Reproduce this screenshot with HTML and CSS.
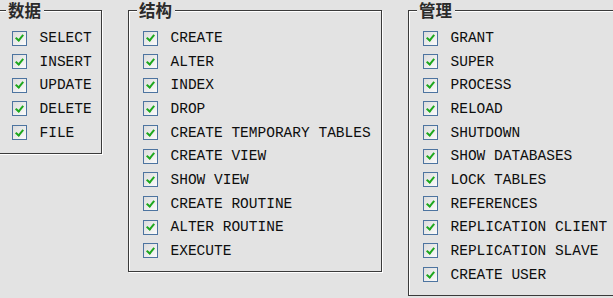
FILE: index.html
```html
<!DOCTYPE html>
<html lang="zh-CN">
<head>
    <meta charset="UTF-8">
    <title>权限</title>
    <link rel="stylesheet" href="styles.css">
</head>
<body>

    <div class="panel">
        <!-- 数据 -->
        <div class="group group-data">
            <span class="legend">数据</span>
            <div class="row"><span class="box"></span><span>SELECT</span></div>
            <div class="row"><span class="box"></span><span>INSERT</span></div>
            <div class="row"><span class="box"></span><span>UPDATE</span></div>
            <div class="row"><span class="box"></span><span>DELETE</span></div>
            <div class="row"><span class="box"></span><span>FILE</span></div>
        </div>

        <!-- 结构 -->
        <div class="group group-struct">
            <span class="legend">结构</span>
            <div class="row"><span class="box"></span><span>CREATE</span></div>
            <div class="row"><span class="box"></span><span>ALTER</span></div>
            <div class="row"><span class="box"></span><span>INDEX</span></div>
            <div class="row"><span class="box"></span><span>DROP</span></div>
            <div class="row"><span class="box"></span><span>CREATE TEMPORARY TABLES</span></div>
            <div class="row"><span class="box"></span><span>CREATE VIEW</span></div>
            <div class="row"><span class="box"></span><span>SHOW VIEW</span></div>
            <div class="row"><span class="box"></span><span>CREATE ROUTINE</span></div>
            <div class="row"><span class="box"></span><span>ALTER ROUTINE</span></div>
            <div class="row"><span class="box"></span><span>EXECUTE</span></div>
        </div>

        <!-- 管理 -->
        <div class="group group-admin">
            <span class="legend">管理</span>
            <div class="row"><span class="box"></span><span>GRANT</span></div>
            <div class="row"><span class="box"></span><span>SUPER</span></div>
            <div class="row"><span class="box"></span><span>PROCESS</span></div>
            <div class="row"><span class="box"></span><span>RELOAD</span></div>
            <div class="row"><span class="box"></span><span>SHUTDOWN</span></div>
            <div class="row"><span class="box"></span><span>SHOW DATABASES</span></div>
            <div class="row"><span class="box"></span><span>LOCK TABLES</span></div>
            <div class="row"><span class="box"></span><span>REFERENCES</span></div>
            <div class="row"><span class="box"></span><span>REPLICATION CLIENT</span></div>
            <div class="row"><span class="box"></span><span>REPLICATION SLAVE</span></div>
            <div class="row"><span class="box"></span><span>CREATE USER</span></div>
        </div>
    </div>

</body>
</html>
```

FILE: styles.css
```css
body {
    margin: 0;
    background-color: #e3e3e3;
    color: #0e0e0e;
    font-family: "Liberation Mono", "DejaVu Sans Mono", monospace;
    overflow: hidden;
}

.panel {
    display: flex;
    align-items: flex-start;
    gap: 26px;
    padding-top: 10px;
    margin-left: -3px;
}

.group {
    position: relative;
    box-sizing: border-box;
    display: flex;
    flex-direction: column;
    gap: 7.67px;
    padding: 19px 0 12px 14px;
    border: 1px solid #3a3a3a;
    box-shadow: 1px 1px 0 #ffffff, inset 1px 1px 0 #ffffff;
    flex-shrink: 0;
}

.group-data {
    width: 105px;
}

.group-struct {
    width: 254px;
}

.group-admin {
    width: 213px;
}

.legend {
    position: absolute;
    top: -10px;
    left: 8px;
    padding: 0 3px 0 2px;
    background-color: #e3e3e3;
    font-family: "Noto Sans CJK SC", "Noto Sans", sans-serif;
    font-size: 16.5px;
    font-weight: bold;
    line-height: 18px;
    color: #2a2a2a;
}

.row {
    display: flex;
    align-items: center;
    gap: 12.5px;
    height: 16px;
    font-size: 14.5px;
    line-height: 16px;
    white-space: nowrap;
}

.box {
    position: relative;
    box-sizing: border-box;
    width: 15px;
    height: 15px;
    flex-shrink: 0;
    border: 1px solid #4d74a0;
    background: linear-gradient(135deg, #dcdcdc, #fbfbfb);
}

/* check mark */
.box::after {
    content: "";
    position: absolute;
    left: 4px;
    top: 1.5px;
    width: 3px;
    height: 6px;
    border: solid #1ea81e;
    border-width: 0 2.5px 2.5px 0;
    transform: rotate(40deg);
}
```
